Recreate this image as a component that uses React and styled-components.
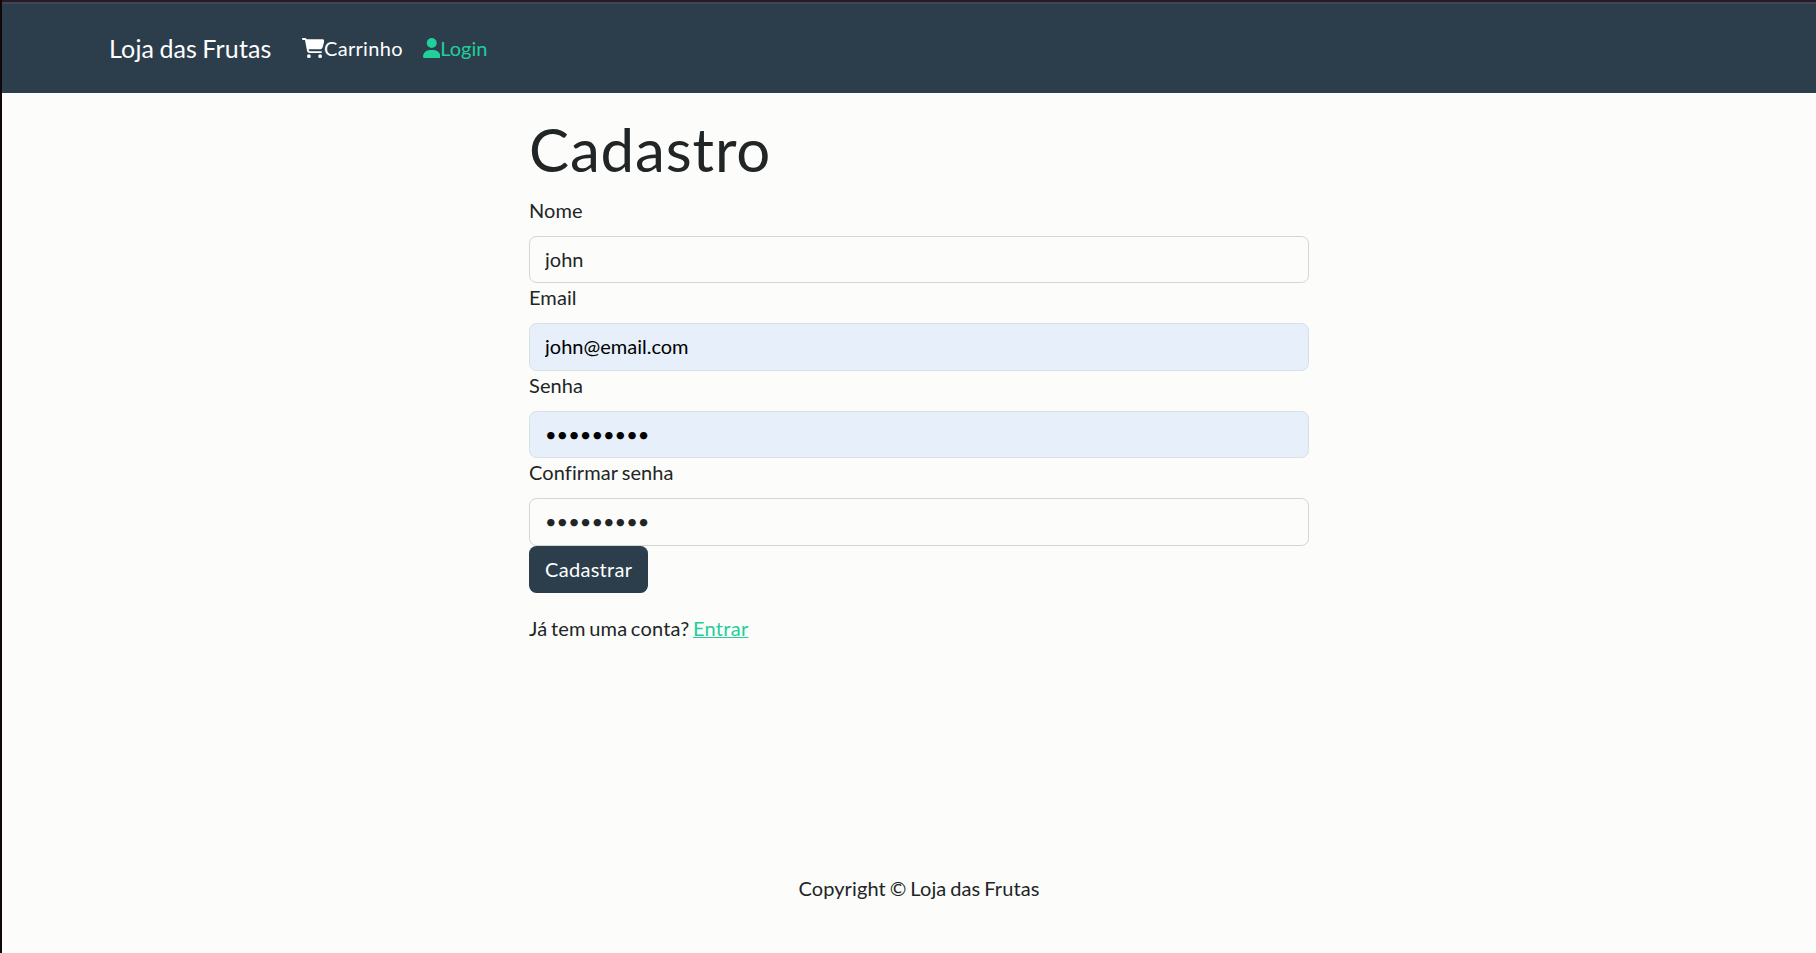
import React from 'react';
import styled, { createGlobalStyle } from 'styled-components';
import { FaCartShopping, FaUser } from 'react-icons/fa6';

const GlobalStyle = createGlobalStyle`
  *, *::before, *::after { box-sizing: border-box; }
  html { background: #fcfcfa; }
  body {
    margin: 0;
    font-family: Lato, "Liberation Sans", sans-serif;
    font-size: 20px;
    line-height: 30px;
    word-spacing: -1.3px;
    color: #212525;
  }
`;

const Page = styled.div`
  display: flex;
  flex-direction: column;
  min-height: 953px;
  border-left: 2px solid #100808;
  background: #fcfcfa;
`;

const Header = styled.header`
  height: 93px;
  padding-left: 107px;
  display: flex;
  align-items: center;
  background: #2c3e4c;
  border-top: 2px solid #231d24;
  box-shadow: inset 0 2px #44435a;
`;

const Brand = styled.a`
  font-size: 25px;
  letter-spacing: 0.15px;
  color: #fff;
  text-decoration: none;
  margin-right: 30px;
  padding-top: 1px;
`;

const Nav = styled.nav`
  display: flex;
  gap: 20px;
`;

const NavLink = styled.a`
  display: flex;
  align-items: center;
  color: ${(p) => (p.$active ? '#21cf9b' : '#fff')};
  letter-spacing: ${(p) => (p.$active ? 0 : 0.3)}px;
  line-height: 28px;
  padding-top: 1px;
  text-decoration: none;
  svg {
    display: block;
    width: ${(p) => p.$iconWidth}px;
    height: 20px;
  }
`;

const Content = styled.div`
  display: flex;
  flex-direction: column;
  align-items: center;
  flex: 1;
  padding-left: 20px;
`;

const Main = styled.main`
  width: 780px;
  padding-top: 20.5px;
  flex: 1;
`;

const Title = styled.h1`
  margin: 0 0 11px;
  font-size: 60px;
  line-height: 71px;
  letter-spacing: 0.85px;
  font-weight: 400;
`;

const Field = styled.div`
  display: flex;
  flex-direction: column;
  gap: 10px;
`;

const Label = styled.label`
  line-height: 28px;
  padding-bottom: 2px;
  letter-spacing: 0.1px;
  font-variant-ligatures: common-ligatures;
`;

const Input = styled.input`
  width: 100%;
  height: 47.5px;
  padding: 7px 15px 8px;
  border: 1px solid ${(p) => (p.$filled ? '#d9e0e4' : '#d3d6d3')};
  border-radius: 7.5px;
  background: ${(p) => (p.$filled ? '#e6effa' : '#fcfcfa')};
  color: ${(p) => (p.$filled ? '#000' : '#212525')};
  font: inherit;
  outline: none;
`;

const Submit = styled.button`
  display: block;
  height: 47.5px;
  padding: 0 16px;
  border: 0;
  border-radius: 7.5px;
  background: #2c3e4c;
  color: #fff;
  font: inherit;
  letter-spacing: 0.3px;
`;

const Prompt = styled.p`
  margin: 20px 0 0;
  letter-spacing: 0.2px;
  word-spacing: -1.8px;
`;

const PromptLink = styled.a`
  color: #25cd9c;
  letter-spacing: 0.3px;
  text-decoration-thickness: 1px;
`;

const Footer = styled.footer`
  padding: 20px 0 50px;
  letter-spacing: 0.1px;
`;

const fields = [
  { id: 'nome', label: 'Nome', type: 'text', value: 'john' },
  { id: 'email', label: 'Email', type: 'email', value: 'john@email.com', filled: true },
  { id: 'senha', label: 'Senha', type: 'password', value: 'senha1234', filled: true },
  { id: 'confirmar', label: 'Confirmar senha', type: 'password', value: 'senha1234' },
];

export default function App() {
  return (
    <>
      <GlobalStyle />
      <Page>
        <Header>
          <Brand>Loja das Frutas</Brand>
          <Nav>
            <NavLink $iconWidth={22.5}><FaCartShopping />Carrinho</NavLink>
            <NavLink $active $iconWidth={17.5}><FaUser />Login</NavLink>
          </Nav>
        </Header>
        <Content>
          <Main>
            <Title>Cadastro</Title>
            <form>
              {fields.map((f) => (
                <Field key={f.id}>
                  <Label htmlFor={f.id}>{f.label}</Label>
                  <Input id={f.id} type={f.type} defaultValue={f.value} $filled={f.filled} />
                </Field>
              ))}
              <Submit type="button">Cadastrar</Submit>
            </form>
            <Prompt>Já tem uma conta? <PromptLink href="#entrar">Entrar</PromptLink></Prompt>
          </Main>
          <Footer>Copyright © Loja das Frutas</Footer>
        </Content>
      </Page>
    </>
  );
}
